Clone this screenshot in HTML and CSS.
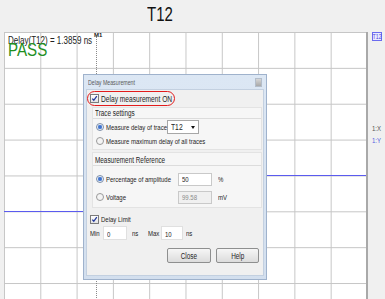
FILE: index.html
```html
<!DOCTYPE html>
<html lang="en">
<head>
  <meta charset="UTF-8">
  <title>T12 Delay Measurement</title>
  <link rel="stylesheet" href="styles.css">
</head>
<body>

  <div class="title"><span class="tx">T12</span></div>

  <div class="main">
    <div class="chart">
      <svg class="traces" width="362" height="270" viewBox="0 0 362 270">
        <polyline points="0,179.5 180,179.5 180,143.5 362,143.5" fill="none" stroke="#5b5bef" stroke-width="1"/>
      </svg>

      <div class="marker"><span class="marker-tag">M1</span></div>

      <div class="readout">
        <div class="readout-value"><span class="tx">Delay(T12) = 1.3859 ns</span></div>
        <div class="readout-pass"><span class="tx">PASS</span></div>
      </div>

      <div class="dialog">
        <div class="dialog-bar">
          <span class="dialog-title"><span class="tx">Delay Measurement</span></span>
          <span class="dialog-close"></span>
        </div>
        <div class="dialog-body">
          <div class="check-row highlight">
            <span class="checkbox"><svg width="7" height="7" viewBox="0 0 7 7"><path d="M1.3 3.6 L2.8 5.3 L5.8 1.2" fill="none" stroke="#23399a" stroke-width="1.3"/></svg></span>
            <span class="tx">Delay measurement ON</span>
          </div>

          <div class="group">
            <div class="group-title"><span class="tx">Trace settings</span></div>
            <div class="opt-row">
              <span class="radio on"></span>
              <span class="opt-label trace-label"><span class="tx">Measure delay of trace</span></span>
              <span class="select"><span class="tx">T12</span><span class="caret"></span></span>
            </div>
            <div class="opt-row">
              <span class="radio"></span>
              <span class="opt-label"><span class="tx">Measure maximum delay of all traces</span></span>
            </div>
          </div>

          <div class="group ref">
            <div class="group-title"><span class="tx">Measurement Reference</span></div>
            <div class="opt-row">
              <span class="radio on"></span>
              <span class="opt-label ref-label"><span class="tx">Percentage of amplitude</span></span>
              <span class="field"><span class="tx">50</span></span>
              <span class="unit"><span class="tx">%</span></span>
            </div>
            <div class="opt-row">
              <span class="radio"></span>
              <span class="opt-label ref-label"><span class="tx">Voltage</span></span>
              <span class="field disabled"><span class="tx">99.58</span></span>
              <span class="unit"><span class="tx">mV</span></span>
            </div>
          </div>

          <div class="check-row limit">
            <span class="checkbox"><svg width="7" height="7" viewBox="0 0 7 7"><path d="M1.3 3.6 L2.8 5.3 L5.8 1.2" fill="none" stroke="#23399a" stroke-width="1.3"/></svg></span>
            <span class="tx">Delay Limit</span>
          </div>

          <div class="limit-row">
            <span class="lim-label"><span class="tx">Min</span></span>
            <span class="field small"><span class="tx">0</span></span>
            <span class="lim-unit"><span class="tx">ns</span></span>
            <span class="lim-label"><span class="tx">Max</span></span>
            <span class="field small max"><span class="tx">10</span></span>
            <span class="lim-unit"><span class="tx">ns</span></span>
          </div>

          <div class="buttons">
            <button class="btn close"><span class="tx mid">Close</span></button>
            <button class="btn"><span class="tx mid">Help</span></button>
          </div>
        </div>
      </div>
    </div>

    <div class="legend">
      <span class="legend-tag"><span class="tx mid">T12</span></span>
      <div class="legend-axes">
        <span class="axis-x"><span class="tx">1:X</span></span>
        <span class="axis-y"><span class="tx">1:Y</span></span>
      </div>
    </div>
  </div>

</body>
</html>
```

FILE: styles.css
```css
body {
  margin: 0;
  width: 385px;
  height: 299px;
  overflow: hidden;
  background: #f0f0f0;
  font-family: "Liberation Sans", Arial, sans-serif;
  color: #1e1e1e;
}
/* the capture is squeezed sideways, so every text run is too */
.tx {
  display: inline-block;
  white-space: nowrap;
  transform: scaleX(0.75);
  transform-origin: 0 50%;
}
.tx.mid {
  transform-origin: 50% 50%;
}
.title {
  height: 32px;
  padding-left: 147px;
  box-sizing: border-box;
  font-size: 20px;
  line-height: 28px;
  color: #111;
}
.main {
  display: flex;
}

/* plot area */
.chart {
  position: relative;
  margin-left: 4px;
  width: 362px;
  height: 270px;
  border-right: 2px solid #a9a9a9;
  background:
    linear-gradient(to right, #c6c6c6 1px, transparent 1px) 0 0 / 36.3px 100%,
    linear-gradient(#c6c6c6 1px, transparent 1px) 0 0 / 100% 35.86px,
    #fff;
}
.traces {
  position: absolute;
  left: 0;
  top: 0;
}
.marker {
  position: absolute;
  left: 92px;
  top: 5px;
  bottom: 0;
  border-left: 1px dotted #8a8a8a;
}
.marker-tag {
  position: absolute;
  left: -3px;
  top: -5px;
  font-size: 6px;
  line-height: 6px;
  font-weight: bold;
  color: #222;
}
.readout {
  position: absolute;
  left: 4px;
  top: 3px;
}
.readout-value {
  font-size: 11px;
  line-height: 11px;
  color: #222;
}
.readout-value .tx {
  transform: scaleX(0.73);
}
.readout-pass {
  margin-top: -5px;
  font-size: 18px;
  line-height: 18px;
  color: #1f8f1f;
}
.readout-pass .tx {
  transform: scaleX(0.84);
}

/* dialog */
.dialog {
  position: absolute;
  left: 79px;
  top: 42px;
  width: 184px;
  height: 206px;
  box-sizing: border-box;
  border: 1px solid #9fb2cc;
  padding: 0 2px 3px 2px;
  background: linear-gradient(#dce7f4, #d3dfee);
  display: flex;
  flex-direction: column;
}
.dialog-bar {
  height: 14px;
  display: flex;
  align-items: center;
  justify-content: space-between;
  padding: 0 2px;
}
.dialog-title {
  font-size: 7px;
  color: #5a5a5a;
}
.dialog-close {
  width: 5px;
  height: 7px;
  border: 1px solid #b3bdca;
  background: linear-gradient(#d6d6d6, #a9a9a9);
}
.dialog-body {
  flex: 1;
  background: #f0f0f0;
  border: 1px solid #c3d0e0;
  padding-top: 1px;
  font-size: 8px;
}
.check-row {
  display: flex;
  align-items: center;
  gap: 2px;
}
.highlight {
  width: 88px;
  height: 15px;
  box-sizing: border-box;
  border: 1.5px solid #e21c1c;
  border-radius: 8px;
  padding-left: 2px;
  font-size: 8.5px;
}
.highlight .tx {
  transform: scaleX(0.78);
}
.limit {
  height: 13px;
  margin-top: 5px;
  padding-left: 3px;
}
.checkbox {
  width: 7px;
  height: 7px;
  flex-shrink: 0;
  border: 1px solid #7b7b7b;
  background: linear-gradient(#fff, #e3e3e3);
  display: flex;
}
.group {
  margin: 1px 1px 0 5px;
  border: 1px solid #e3e3e3;
  background: #f6f6f6;
  padding-bottom: 1px;
}
.group-title {
  height: 10px;
  padding-left: 2px;
  line-height: 10px;
  border-bottom: 1px solid #dcdcdc;
  font-size: 8.5px;
}
.opt-row {
  height: 14px;
  margin-top: 1px;
  padding-left: 3px;
  display: flex;
  align-items: center;
}
.opt-row + .opt-row {
  margin-top: 0;
}
.ref {
  margin-top: 2px;
  padding-bottom: 2px;
}
.ref .group-title {
  padding-top: 2px;
}
.ref .opt-row {
  height: 16px;
  margin-top: 5px;
}
.ref .opt-row + .opt-row {
  margin-top: 2px;
}
.radio {
  width: 6px;
  height: 6px;
  border: 1px solid #9a9a9a;
  border-radius: 50%;
  background: #f4f4f4;
  margin-right: 2px;
  flex-shrink: 0;
}
.radio.on {
  background: radial-gradient(circle, #2f62c4 0, #5b8ad8 45%, #eef2f8 60%);
  border-color: #7c8ea8;
}
.opt-label {
  white-space: nowrap;
}
.trace-label {
  width: 61px;
}
.ref-label {
  width: 72px;
}
.select {
  width: 32px;
  height: 14px;
  box-sizing: border-box;
  border: 1px solid #a7a7a7;
  background: #fff;
  padding: 0 3px;
  display: flex;
  align-items: center;
  justify-content: space-between;
  font-size: 9px;
}
.caret {
  border-left: 2px solid transparent;
  border-right: 2px solid transparent;
  border-top: 3px solid #111;
}
.field {
  width: 34px;
  height: 13px;
  box-sizing: border-box;
  border: 1px solid #c9c9c9;
  background: #fff;
  padding-left: 3px;
  line-height: 11px;
}
.field.disabled {
  background: #f0f0f0;
  color: #8a8a8a;
}
.unit {
  margin-left: 6px;
}
.limit-row {
  height: 14px;
  padding-left: 3px;
  display: flex;
  align-items: center;
}
.lim-label {
  width: 13px;
}
.field.small {
  width: 24px;
  height: 14px;
  line-height: 16px;
  border-color: #e0e0e0;
}
.field.max {
  width: 22px;
}
.lim-unit {
  width: 16px;
  margin-left: 5px;
}
.lim-unit:last-child {
  margin-left: 3px;
}
.buttons {
  margin-top: 8px;
  padding-right: 4px;
  display: flex;
  justify-content: flex-end;
  gap: 5px;
}
.btn {
  width: 43px;
  height: 15px;
  padding: 0;
  border: 1px solid #8e8f8f;
  border-radius: 2px;
  background: linear-gradient(#f6f6f6, #dcdcdc);
  font-family: inherit;
  font-size: 8.5px;
  color: #1e1e1e;
}
.btn.close {
  width: 44px;
}

/* trace legend */
.legend {
  padding-left: 4px;
  display: flex;
  flex-direction: column;
  align-items: flex-start;
}
.legend-tag {
  width: 10px;
  height: 9px;
  box-sizing: border-box;
  display: flex;
  justify-content: center;
  font-size: 7px;
  line-height: 7px;
  border: 1px solid #6b6bef;
  background: #eaeaff;
  color: #4646e0;
}
.legend-axes {
  margin-top: 82px;
  display: flex;
  flex-direction: column;
  font-size: 8px;
  line-height: 12px;
}
.axis-x {
  color: #555;
}
.axis-y {
  color: #5060e0;
}
```
